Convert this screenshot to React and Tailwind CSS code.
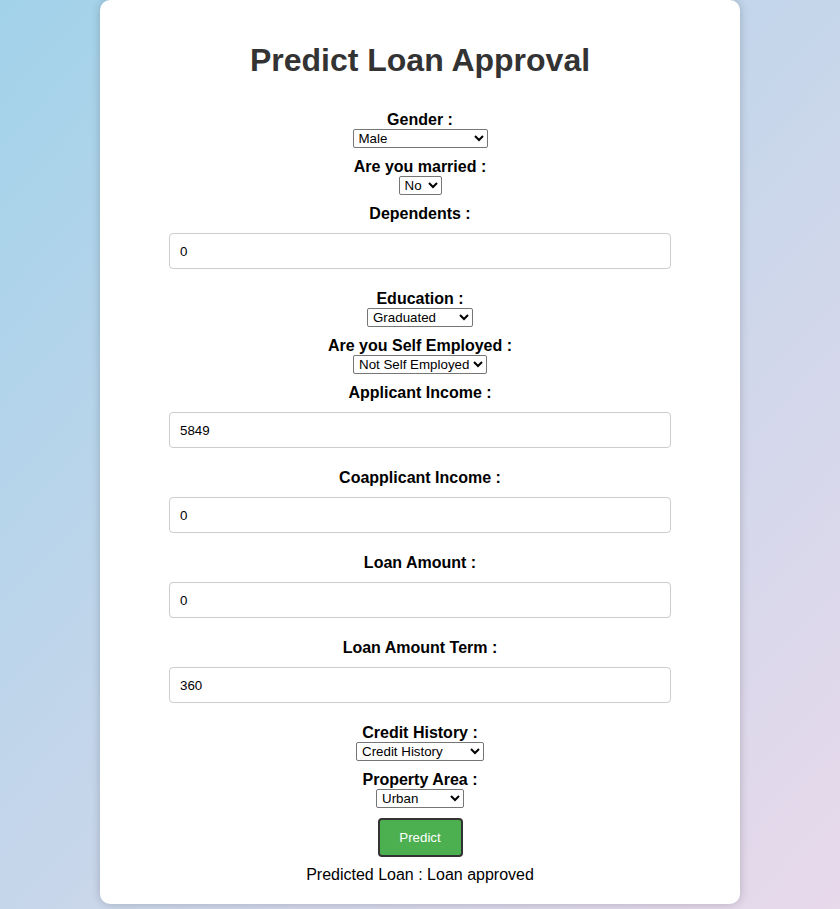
import React, { useState } from 'react';

const font = { fontFamily: '"Liberation Sans", Arial, sans-serif' };

const SelectField = ({ label, value, options, width, first }) => (
  <>
    <label className={`block text-[16px] font-bold leading-[18px] text-black ${first ? 'mt-[32px]' : 'mt-[10px]'}`}>
      {label}
    </label>
    <select
      defaultValue={value}
      className={`h-[19px] ${width} border border-[#767676] rounded-[2px] bg-white text-[13.33px] leading-[15px] text-black pl-[1px]`}
    >
      {options.map((o) => (
        <option key={o} value={o}>
          {o}
        </option>
      ))}
    </select>
  </>
);

const InputField = ({ label, value }) => (
  <>
    <label className="block mt-[10px] text-[16px] font-bold leading-[18px] text-black">{label}</label>
    <input
      type="text"
      defaultValue={value}
      className="mt-[10px] mb-[11px] h-[36px] w-[502px] border border-[#cccccc] rounded-[4px] bg-white px-[10px] text-[13.33px] text-black outline-none"
    />
  </>
);

const App = () => {
  const [result] = useState('Loan approved');

  return (
    <div
      className="min-h-screen w-full bg-linear-to-br from-[#a1d2ea] to-[#e8d9eb] flex justify-center"
      style={font}
    >
      <div className="w-[640px] bg-white rounded-[10px] shadow-[0_0_10px_rgba(0,0,0,0.2)] pt-[42px] pb-[20px] flex flex-col items-center self-start">
        <h1 className="text-[32px] font-bold leading-[37px] text-[#333333]">Predict Loan Approval</h1>

        <SelectField first label="Gender :" value="Male" options={['Male', 'Female']} width="w-[135px]" />
        <SelectField label="Are you married :" value="No" options={['No', 'Yes']} width="w-[43px]" />
        <InputField label="Dependents :" value="0" />
        <SelectField label="Education :" value="Graduated" options={['Graduated', 'Not Graduated']} width="w-[106px]" />
        <SelectField
          label="Are you Self Employed :"
          value="Not Self Employed"
          options={['Not Self Employed', 'Self Employed']}
          width="w-[134px]"
        />
        <InputField label="Applicant Income :" value="5849" />
        <InputField label="Coapplicant Income :" value="0" />
        <InputField label="Loan Amount :" value="0" />
        <InputField label="Loan Amount Term :" value="360" />
        <SelectField
          label="Credit History :"
          value="Credit History"
          options={['Credit History', 'Yes', 'No']}
          width="w-[128px]"
        />
        <SelectField
          label="Property Area :"
          value="Urban"
          options={['Urban', 'Semiurban', 'Rural']}
          width="w-[88px]"
        />

        <button className="mt-[10px] h-[39px] w-[85px] bg-[#4caf50] border-2 border-[#333333] rounded-[4px] text-white text-[13.33px]">
          Predict
        </button>

        <p className="mt-[9px] text-[16px] leading-[18px] text-black">Predicted Loan : {result}</p>
      </div>
    </div>
  );
};

export default App;
